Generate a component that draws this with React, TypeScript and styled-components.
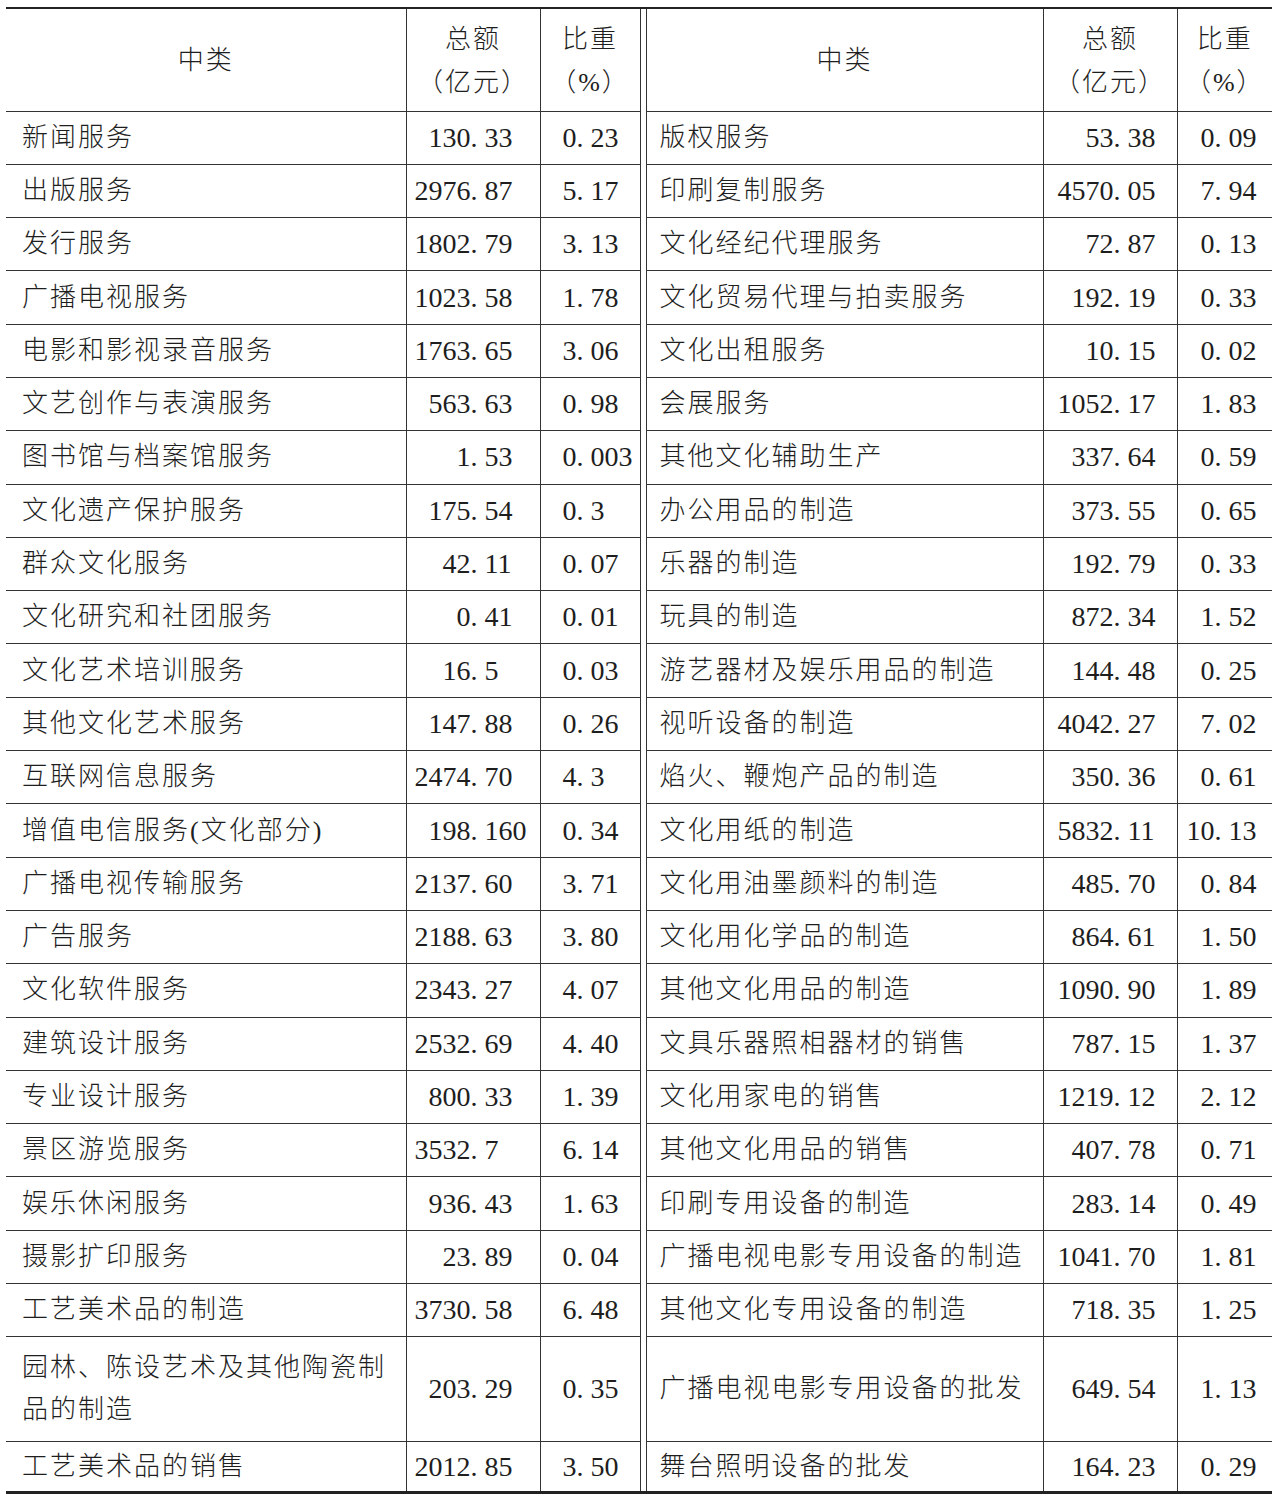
import React from 'react';
import styled, { createGlobalStyle } from 'styled-components';

const GlobalStyle = createGlobalStyle`
  html, body {
    margin: 0;
    padding: 0;
    background: #fff;
  }
  body {
    font-family: "Liberation Serif", "Noto Sans CJK SC", serif;
    color: #1e1e1e;
  }
`;

const Page = styled.div`
  padding: 7px 5px 0 6px;
`;

const Table = styled.table`
  width: 1266px;
  border-collapse: collapse;
  table-layout: fixed;
  border-top: 2px solid #222;
  border-bottom: 3px solid #222;
`;

const Row = styled.tr<{ $h: number }>`
  height: ${({ $h }) => $h}px;
`;

const Cell = styled.td`
  padding: 0;
  vertical-align: middle;
  border-bottom: 1px solid #333;
  border-left: 1px solid #333;
  &:first-child {
    border-left: none;
  }
`;

const HeadCell = styled(Cell).attrs({ as: 'th' })`
  font-weight: 300;
  font-size: 26px;
  line-height: 43px;
  text-align: center;
  letter-spacing: 2px;
  padding-top: 2px;
`;

const NameCell = styled(Cell)<{ $pad: number }>`
  padding-left: ${({ $pad }) => $pad}px;
  padding-right: 2px;
  font-size: 26px;
  font-weight: 300;
  letter-spacing: 2px;
  line-height: 42px;
`;

const NumCell = styled(Cell)`
  font-size: 28px;
  white-space: nowrap;
`;

const IntPart = styled.span<{ $w: number }>`
  display: inline-block;
  width: ${({ $w }) => $w}px;
  text-align: right;
`;

const Gap = styled.td`
  padding: 0;
  border-left: 1px solid #333;
  border-right: 1px solid #333;
  border-bottom: none;
`;

type Item = [string, string, string];

const left: Item[] = [
  ['新闻服务', '130. 33', '0. 23'],
  ['出版服务', '2976. 87', '5. 17'],
  ['发行服务', '1802. 79', '3. 13'],
  ['广播电视服务', '1023. 58', '1. 78'],
  ['电影和影视录音服务', '1763. 65', '3. 06'],
  ['文艺创作与表演服务', '563. 63', '0. 98'],
  ['图书馆与档案馆服务', '1. 53', '0. 003'],
  ['文化遗产保护服务', '175. 54', '0. 3'],
  ['群众文化服务', '42. 11', '0. 07'],
  ['文化研究和社团服务', '0. 41', '0. 01'],
  ['文化艺术培训服务', '16. 5', '0. 03'],
  ['其他文化艺术服务', '147. 88', '0. 26'],
  ['互联网信息服务', '2474. 70', '4. 3'],
  ['增值电信服务(文化部分)', '198. 160', '0. 34'],
  ['广播电视传输服务', '2137. 60', '3. 71'],
  ['广告服务', '2188. 63', '3. 80'],
  ['文化软件服务', '2343. 27', '4. 07'],
  ['建筑设计服务', '2532. 69', '4. 40'],
  ['专业设计服务', '800. 33', '1. 39'],
  ['景区游览服务', '3532. 7', '6. 14'],
  ['娱乐休闲服务', '936. 43', '1. 63'],
  ['摄影扩印服务', '23. 89', '0. 04'],
  ['工艺美术品的制造', '3730. 58', '6. 48'],
  ['园林、陈设艺术及其他陶瓷制品的制造', '203. 29', '0. 35'],
  ['工艺美术品的销售', '2012. 85', '3. 50'],
];

const right: Item[] = [
  ['版权服务', '53. 38', '0. 09'],
  ['印刷复制服务', '4570. 05', '7. 94'],
  ['文化经纪代理服务', '72. 87', '0. 13'],
  ['文化贸易代理与拍卖服务', '192. 19', '0. 33'],
  ['文化出租服务', '10. 15', '0. 02'],
  ['会展服务', '1052. 17', '1. 83'],
  ['其他文化辅助生产', '337. 64', '0. 59'],
  ['办公用品的制造', '373. 55', '0. 65'],
  ['乐器的制造', '192. 79', '0. 33'],
  ['玩具的制造', '872. 34', '1. 52'],
  ['游艺器材及娱乐用品的制造', '144. 48', '0. 25'],
  ['视听设备的制造', '4042. 27', '7. 02'],
  ['焰火、鞭炮产品的制造', '350. 36', '0. 61'],
  ['文化用纸的制造', '5832. 11', '10. 13'],
  ['文化用油墨颜料的制造', '485. 70', '0. 84'],
  ['文化用化学品的制造', '864. 61', '1. 50'],
  ['其他文化用品的制造', '1090. 90', '1. 89'],
  ['文具乐器照相器材的销售', '787. 15', '1. 37'],
  ['文化用家电的销售', '1219. 12', '2. 12'],
  ['其他文化用品的销售', '407. 78', '0. 71'],
  ['印刷专用设备的制造', '283. 14', '0. 49'],
  ['广播电视电影专用设备的制造', '1041. 70', '1. 81'],
  ['其他文化专用设备的制造', '718. 35', '1. 25'],
  ['广播电视电影专用设备的批发', '649. 54', '1. 13'],
  ['舞台照明设备的批发', '164. 23', '0. 29'],
];

// decimal-aligned number: integer part sits in a fixed box, fraction follows
function Num({ value, w }: { value: string; w: number }) {
  const [int, frac] = value.split('. ');
  return (
    <NumCell>
      <IntPart $w={w}>{int}.</IntPart> {frac}
    </NumCell>
  );
}

function rowHeight(i: number) {
  if (i === 23) return 105;
  if (i === 24) return 51;
  return 53.3;
}

export default function App() {
  return (
    <Page>
      <GlobalStyle />
      <Table>
        <colgroup>
          <col style={{ width: 400 }} />
          <col style={{ width: 134 }} />
          <col style={{ width: 100 }} />
          <col style={{ width: 6 }} />
          <col style={{ width: 397 }} />
          <col style={{ width: 134 }} />
          <col style={{ width: 95 }} />
        </colgroup>
        <thead>
          <Row $h={103}>
            <HeadCell>中类</HeadCell>
            <HeadCell>
              总额
              <br />
              （亿元）
            </HeadCell>
            <HeadCell>
              比重
              <br />
              （%）
            </HeadCell>
            <Gap />
            <HeadCell>中类</HeadCell>
            <HeadCell>
              总额
              <br />
              （亿元）
            </HeadCell>
            <HeadCell>
              比重
              <br />
              （%）
            </HeadCell>
          </Row>
        </thead>
        <tbody>
          {left.map((l, i) => {
            const r = right[i];
            return (
              <Row key={l[0]} $h={rowHeight(i)}>
                <NameCell $pad={16}>{l[0]}</NameCell>
                <Num value={l[1]} w={71} />
                <Num value={l[2]} w={43} />
                <Gap />
                <NameCell $pad={13}>{r[0]}</NameCell>
                <Num value={r[1]} w={77} />
                <Num value={r[2]} w={44} />
              </Row>
            );
          })}
        </tbody>
      </Table>
    </Page>
  );
}
